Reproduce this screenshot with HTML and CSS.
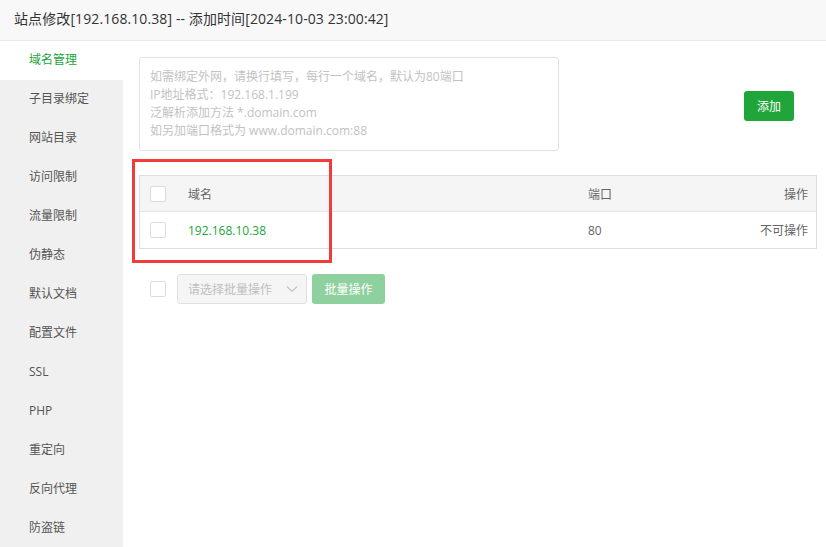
FILE: index.html
```html
<!DOCTYPE html>
<html lang="zh">
<head>
<meta charset="utf-8">
<title>站点修改</title>
<link rel="stylesheet" href="styles.css">
</head>
<body>
<div class="header">站点修改[192.168.10.38] -- 添加时间[2024-10-03 23:00:42]</div>
<div class="layout">
  <ul class="side">
    <li class="active">域名管理</li>
    <li>子目录绑定</li>
    <li>网站目录</li>
    <li>访问限制</li>
    <li>流量限制</li>
    <li>伪静态</li>
    <li>默认文档</li>
    <li>配置文件</li>
    <li>SSL</li>
    <li>PHP</li>
    <li>重定向</li>
    <li>反向代理</li>
    <li>防盗链</li>
  </ul>
  <div class="main">
    <div class="add-row">
      <div class="textarea">
        <div>如需绑定外网，请换行填写，每行一个域名，默认为80端口</div>
        <div>IP地址格式：192.168.1.199</div>
        <div>泛解析添加方法 *.domain.com</div>
        <div>如另加端口格式为 www.domain.com:88</div>
      </div>
      <button class="btn-add">添加</button>
    </div>
    <div class="table">
      <div class="tr thead">
        <div class="c-check"><span class="checkbox"></span></div>
        <div class="c-domain">域名</div>
        <div class="c-port">端口</div>
        <div class="c-op">操作</div>
      </div>
      <div class="tr tbody">
        <div class="c-check"><span class="checkbox"></span></div>
        <div class="c-domain green">192.168.10.38</div>
        <div class="c-port">80</div>
        <div class="c-op">不可操作</div>
      </div>
    </div>
    <div class="batch">
      <span class="checkbox"></span>
      <div class="select">
        <span>请选择批量操作</span>
        <svg width="12" height="8" viewBox="0 0 12 8"><path d="M1 1.5 L6 6.5 L11 1.5" fill="none" stroke="#c0c4cc" stroke-width="1.2"/></svg>
      </div>
      <button class="btn-batch">批量操作</button>
    </div>
    <div class="highlight"></div>
  </div>
</div>
</body>
</html>
```
FILE: styles.css
```css
* { box-sizing: border-box; }
html, body { margin: 0; padding: 0; }
body {
  width: 826px;
  height: 547px;
  overflow: hidden;
  background: #fff;
  font-family: "Open Sans", "Noto Sans CJK SC", sans-serif;
  color: #333;
}
.header {
  height: 41px;
  line-height: 38px;
  padding-left: 14px;
  font-size: 14px;
  letter-spacing: 0.1px;
  color: #333;
  background: #f8f8f8;
  border-bottom: 1px solid #ebebeb;
}
.layout {
  display: flex;
  height: 506px;
}
.side {
  list-style: none;
  margin: 0;
  padding: 0;
  width: 123px;
  background: #f0f0f0;
  flex: none;
}
.side li {
  height: 39px;
  line-height: 38px;
  padding-left: 29px;
  font-size: 12px;
  color: #555;
}
.side li.active {
  background: #fff;
  color: #20a53a;
}
.main {
  position: relative;
  flex: 1;
  padding: 16px 9px 0 16px;
}
.add-row {
  display: flex;
  align-items: flex-start;
}
.textarea {
  width: 420px;
  height: 94px;
  border: 1px solid #e2e2e2;
  border-radius: 3px;
  padding: 10px 10px;
  font-size: 12px;
  line-height: 18px;
  color: #c2c2c2;
}
.btn-add {
  margin: 34px 0 0 185px;
  width: 50px;
  height: 30px;
  border: none;
  border-radius: 3px;
  background: #20a53a;
  color: #fff;
  font-family: inherit;
  font-size: 12px;
  padding: 0;
}
.table {
  margin-top: 24px;
  border: 1px solid #ddd;
  width: 678px;
}
.tr {
  display: flex;
  align-items: center;
  height: 36px;
  font-size: 12px;
  color: #666;
}
.thead {
  background: #f5f5f5;
  border-bottom: 1px solid #e6e6e6;
}
.c-check {
  width: 48px;
  padding-left: 10px;
  display: flex;
  align-items: center;
}
.c-domain { flex: 1; }
.c-port { width: 128px; }
.c-op { width: 100px; text-align: right; padding-right: 8px; }
.green { color: #20a53a; }
.checkbox {
  display: inline-block;
  width: 16px;
  height: 16px;
  border: 1px solid #dcdcdc;
  border-radius: 2px;
  background: #fff;
}
.batch {
  display: flex;
  align-items: center;
  margin-top: 25px;
  padding-left: 11px;
}
.select {
  margin-left: 11px;
  width: 130px;
  height: 30px;
  border: 1px solid #e0e0e0;
  border-radius: 3px;
  background: #f5f5f5;
  display: flex;
  align-items: center;
  justify-content: space-between;
  padding: 0 8px 0 10px;
  font-size: 12px;
  color: #c0c0c0;
}
.btn-batch {
  margin-left: 5px;
  width: 73px;
  height: 30px;
  border: none;
  border-radius: 3px;
  background: #8fd19e;
  color: #fff;
  font-family: inherit;
  font-size: 12px;
  padding: 0;
}
.highlight {
  position: absolute;
  left: 9px;
  top: 118px;
  width: 200px;
  height: 104px;
  border: 3px solid #f23c3c;
  pointer-events: none;
}
```
